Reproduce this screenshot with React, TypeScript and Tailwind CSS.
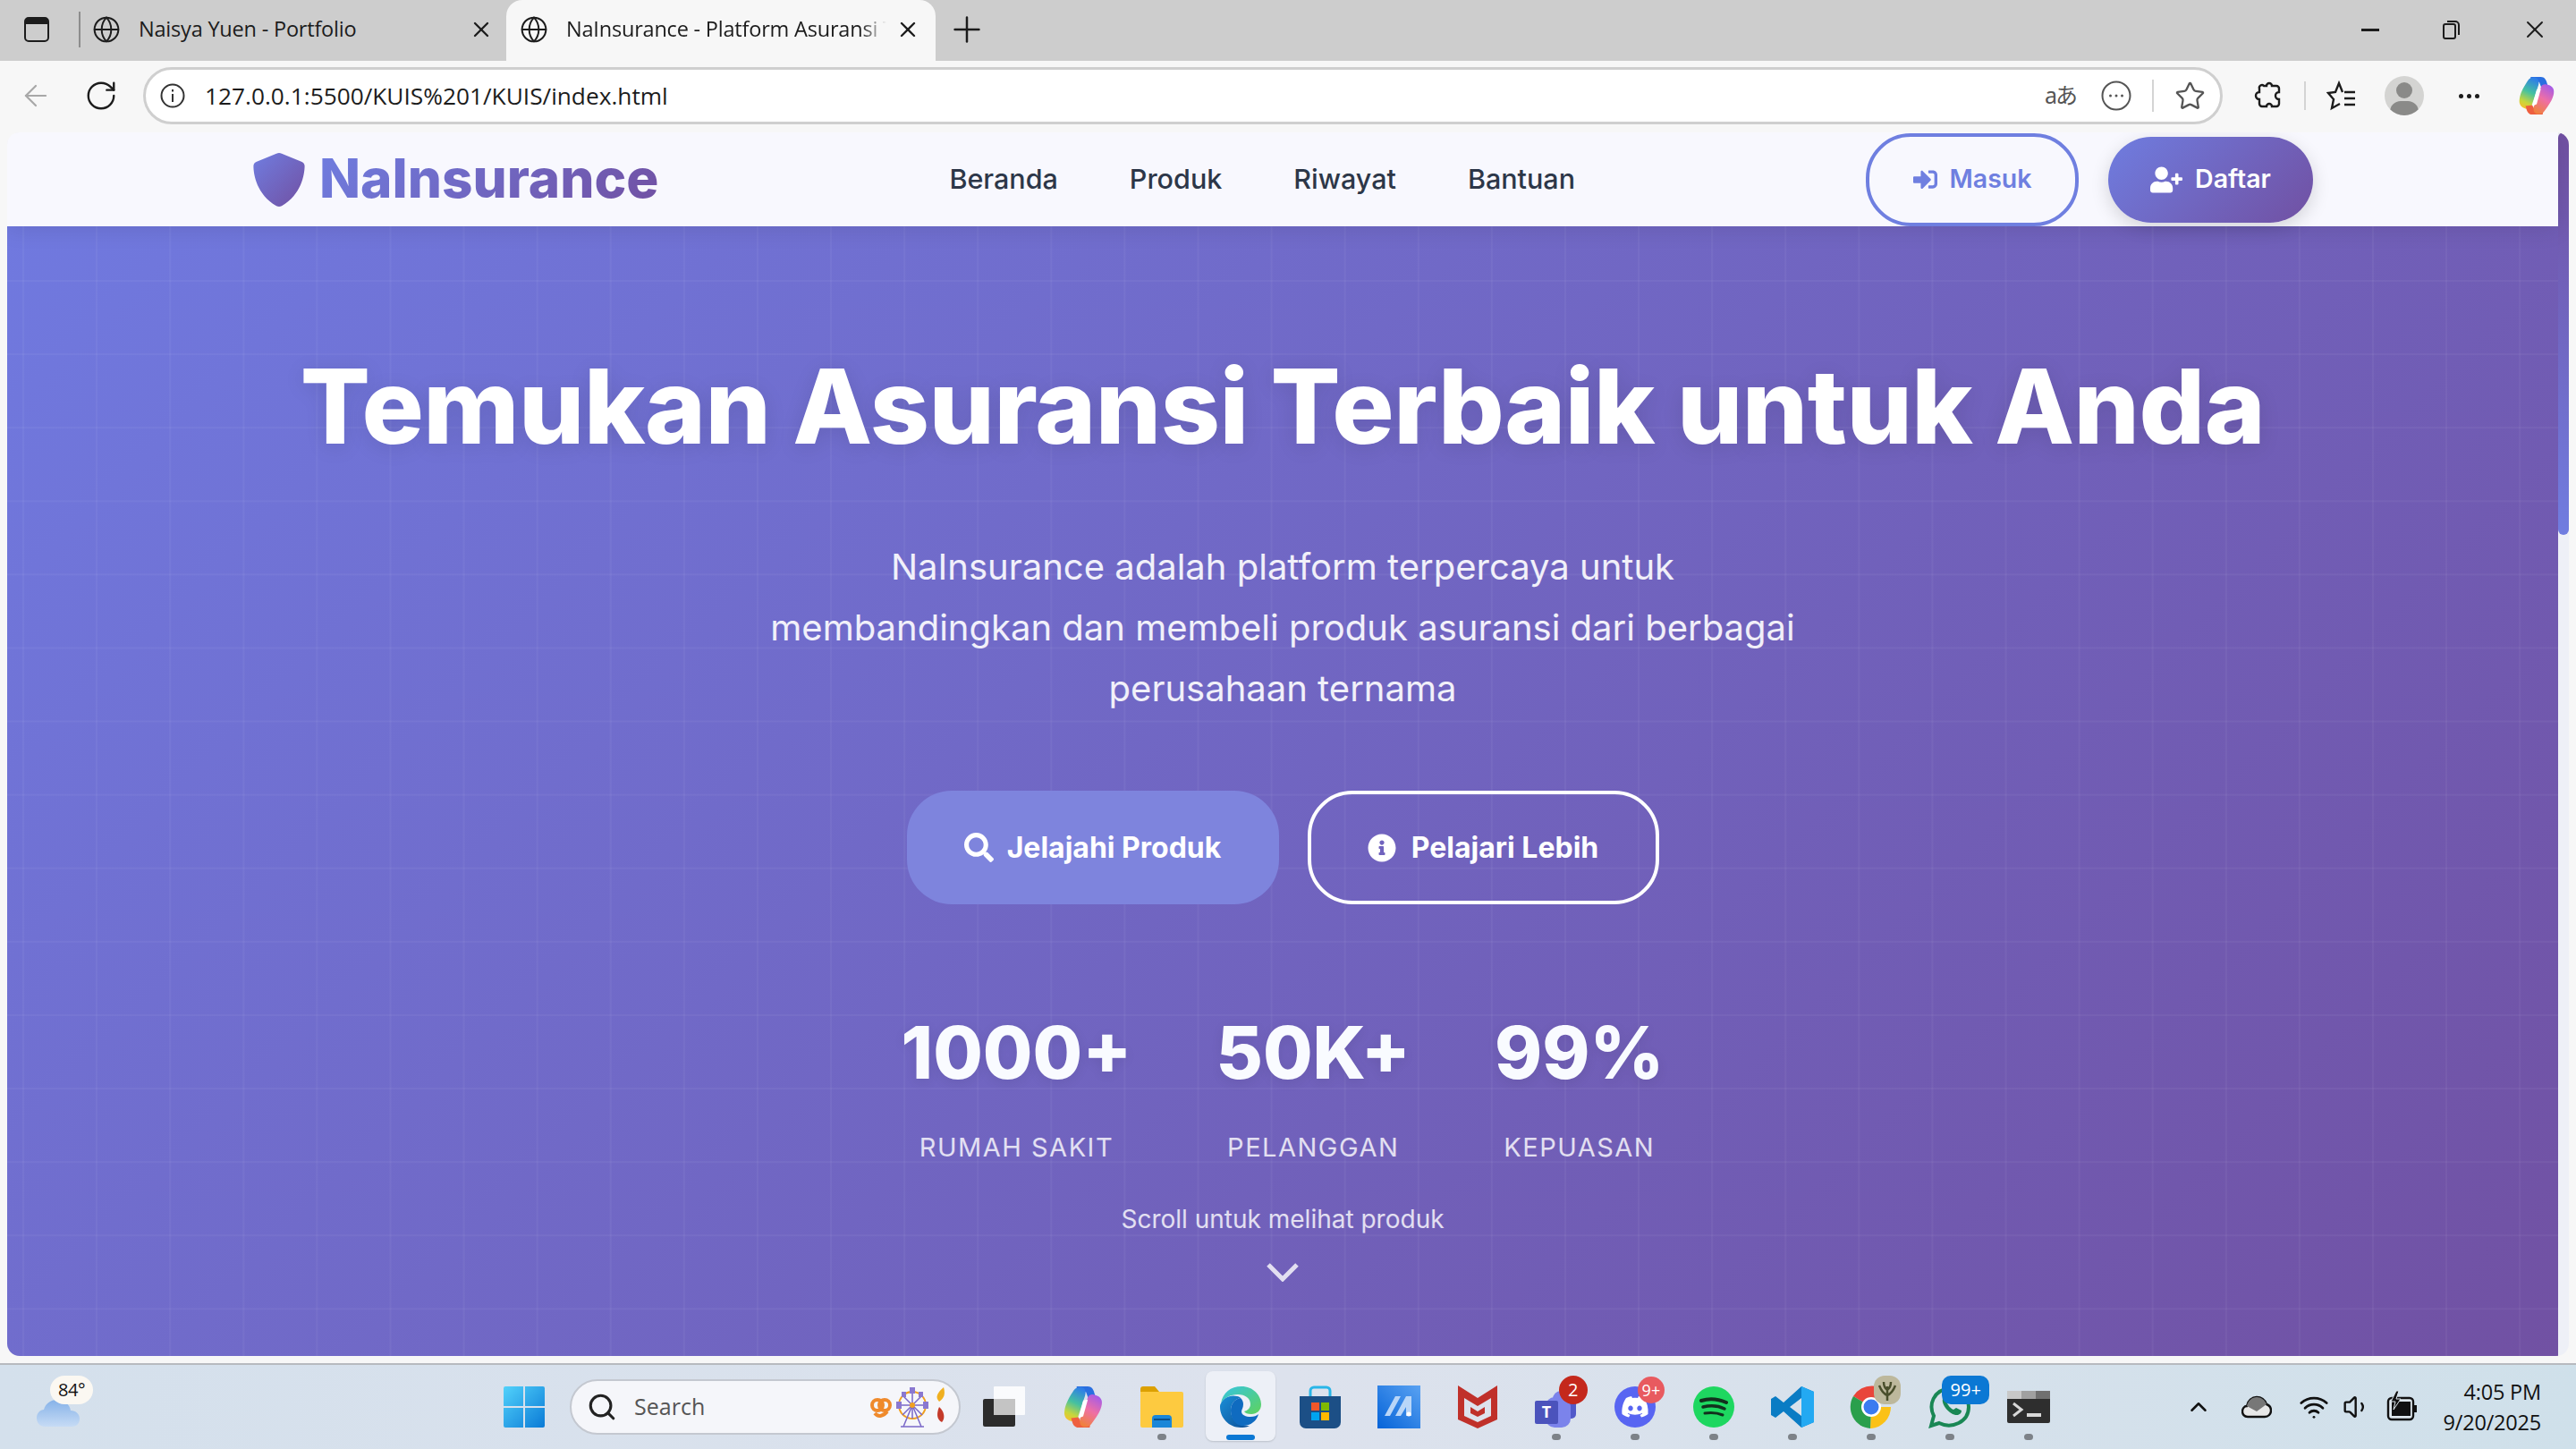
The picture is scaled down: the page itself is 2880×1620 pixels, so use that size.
import React from "react";
import { ArrowLeft, RotateCw, Globe, X, Plus, Star, Search, ChevronUp, Wifi, Volume1 } from "lucide-react";
import { FaSignInAlt, FaUserPlus, FaSearch, FaInfoCircle } from "react-icons/fa";

const UI = "font-['Open_Sans','Noto_Sans',sans-serif]";

function Copilot({ size, id }: { size: number; id: string }) {
  return (
    <svg width={size} height={size} viewBox="0 0 48 48">
      <defs>
        <linearGradient id={id + "a"} x1="0.6" y1="0" x2="0.3" y2="1">
          <stop offset="0" stopColor="#2f7fe6" />
          <stop offset="0.45" stopColor="#45c1a0" />
          <stop offset="0.8" stopColor="#c8d63c" />
          <stop offset="1" stopColor="#f2c22e" />
        </linearGradient>
        <linearGradient id={id + "b"} x1="0.7" y1="0" x2="0.3" y2="1">
          <stop offset="0" stopColor="#a45be8" />
          <stop offset="0.5" stopColor="#ee6fa6" />
          <stop offset="1" stopColor="#f0813f" />
        </linearGradient>
      </defs>
      <path d="M17 2h12c4 0 6 3 7 7l2 6-8 1-3-8-6 0c-3 0-4-2-4-6z" fill="#2a6fe0" />
      <path d="M14 6c2-3 6-4 9-3 4 1 4 6 3 9l-4 12-4 12c-1 3-4 4-7 3-5-1-8-5-7-11 1-8 6-16 10-22z" fill={`url(#${id}a)`} />
      <path d="M31 46H19c-4 0-6-3-7-7l-1-3 8-1 3 6 6 0c3 0 4 1 3 5z" fill="#ee5f3f" />
      <path d="M33 42c-2 3-6 4-9 3-4-1-4-6-3-9l4-12 4-10c1-3 4-4 7-3 5 1 9 4 8 10-1 8-7 15-11 21z" fill={`url(#${id}b)`} />
      <path d="M24 17l5-1-5 18-5 2z" fill="#fff" />
    </svg>
  );
}

function Shield() {
  return (
    <svg width="58" height="62" viewBox="0 0 58 62">
      <defs>
        <linearGradient id="sh" x1="0" y1="0" x2="1" y2="1">
          <stop offset="0" stopColor="#707de0" />
          <stop offset="1" stopColor="#7150a2" />
        </linearGradient>
      </defs>
      <path d="M29 1c1 0 2 .2 3 .7l22 9c2 .8 3.600 2.600 3.600 4.800-.1 9.500-3.500 32-25.600 44.700-2 1-4 1-6 0C4 47.500.4 25 .4 15.500c0-2.200 1.600-4 3.600-4.800l22-9c1-.5 2-.7 3-.7z" fill="url(#sh)" />
    </svg>
  );
}

function Slot({ children, dot, active }: { children: React.ReactNode; dot?: boolean; active?: boolean }) {
  return (
    <div className="relative flex h-full w-[88.1px] items-center justify-center">
      {active && <div className="absolute top-[7px] bottom-[9px] left-[5px] right-[5px] rounded-[8px] bg-[#edf0f7] shadow-[0_1px_2px_rgba(0,0,0,0.15)]" />}
      <div className="relative">{children}</div>
      {dot && <div className="absolute bottom-[10px] h-[7px] w-[10px] rounded-full bg-[#7d8288]" />}
      {active && <div className="absolute bottom-[10px] h-[6px] w-[32px] rounded-full bg-[#0b78d4]" />}
    </div>
  );
}

function Badge({ children, className }: { children: React.ReactNode; className: string }) {
  return <div className={`absolute flex items-center justify-center text-white ${UI} ${className}`}>{children}</div>;
}

function Stat({ value, label }: { value: string; label: string }) {
  return (
    <div className="flex flex-col items-center">
      <div className="text-[80.500px] leading-[96px] font-extrabold text-[#f9fbff] [text-shadow:0_3px_14px_rgba(0,0,0,0.08)]">{value}</div>
      <div className="mt-[38px] text-[29px] leading-[40px] font-normal tracking-[1.5px] text-white/80">{label}</div>
    </div>
  );
}

export default function App() {
  return (
    <div className="flex h-[1620px] w-[2880px] flex-col overflow-hidden bg-[#f7f7f7] font-['Inter',sans-serif]">
      {/* tab strip */}
      <div className={`flex h-[68px] shrink-0 items-center bg-[#cdcdcd] pb-[2px] text-[#1c1c1c] ${UI}`}>
        <div className="ml-[27px] h-[28px] w-[28px] rounded-[5px] border-[2.500px] border-[#1c1c1c] border-t-[8px]" />
        <div className="ml-[33px] h-[40px] w-[2px] bg-[#8d8d8d]" />
        <div className="flex h-full w-[476px] items-center pl-[13px]">
          <Globe size={32} strokeWidth={1.5} />
          <span className="ml-[20px] text-[23.500px] tracking-[-0.2px] whitespace-nowrap">Naisya Yuen - Portfolio</span>
          <X size={28} strokeWidth={2} className="ml-auto mr-[14px]" />
        </div>
        <div className="-mb-[2px] flex h-[68px] w-[480px] items-center rounded-t-[18px] bg-[#f7f7f7] pb-[2px] pl-[15px]">
          <Globe size={32} strokeWidth={1.5} />
          <span className="ml-[20px] w-[358px] overflow-hidden text-[23.500px] tracking-[-0.2px] whitespace-nowrap [mask-image:linear-gradient(90deg,black_92%,transparent)]">NaInsurance - Platform Asuransi T</span>
          <X size={28} strokeWidth={2} className="ml-auto mr-[17px]" />
        </div>
        <Plus size={46} strokeWidth={1.3} className="ml-[12px]" />
        <div className="ml-auto flex items-center">
          <div className="h-[3px] w-[20px] bg-[#1c1c1c]" />
          <svg className="ml-[71px]" width="20" height="22" viewBox="0 0 20 22" fill="none" stroke="#1c1c1c" strokeWidth="2">
            <rect x="1" y="5" width="13" height="16" rx="2" />
            <path d="M5 2h9a4 4 0 0 1 4 4v11" />
          </svg>
          <X size={32} strokeWidth={1.4} className="ml-[67px] mr-[30px]" />
        </div>
      </div>

      {/* toolbar */}
      <div className={`flex h-[78px] shrink-0 items-center bg-[#f7f7f7] text-[#1c1c1c] ${UI}`}>
        <ArrowLeft size={38} strokeWidth={1.4} color="#a8a8a8" className="ml-[21px]" />
        <RotateCw size={38} strokeWidth={1.5} className="ml-[35px]" />
        <div className="ml-[28px] flex h-[64px] w-[2325px] items-center rounded-full border-[3px] border-[#cfcfcf] bg-white">
          <svg className="ml-[16px]" width="28" height="28" viewBox="0 0 28 28" fill="none" stroke="#333" strokeWidth="2">
            <circle cx="14" cy="14" r="12.500" />
            <path d="M14 12v9M14 7v2.500" />
          </svg>
          <span className="ml-[22px] pt-[2px] text-[26.250px] whitespace-nowrap">127.0.0.1:5500/KUIS%201/KUIS/index.html</span>
          <span className="ml-auto font-['Noto_Sans','Noto_Sans_CJK_JP',sans-serif] text-[25px] tracking-[-2px] text-[#555]">aあ</span>
          <svg className="ml-[28px]" width="34" height="34" viewBox="0 0 34 34" fill="none" stroke="#555" strokeWidth="2">
            <circle cx="17" cy="17" r="15.500" />
            <circle cx="10.500" cy="17" r="1.500" fill="#555" stroke="none" />
            <circle cx="17" cy="17" r="1.500" fill="#555" stroke="none" />
            <circle cx="23.500" cy="17" r="1.500" fill="#555" stroke="none" />
          </svg>
          <div className="ml-[23px] h-[36px] w-[2px] bg-[#d4d4d4]" />
          <Star size={35} strokeWidth={1.6} color="#555" className="ml-[23px] mr-[16px]" />
        </div>
        <svg className="ml-[35px]" width="32" height="34" viewBox="0 0 32 34" fill="none" stroke="#1c1c1c" strokeWidth="2.400">
          <path d="M11 6h3a3 3 0 1 1 6 0h5a3 3 0 0 1 3 3v4a3.500 3.500 0 1 0 0 8v5a3 3 0 0 1-3 3h-5a3 3 0 1 0-6 0H9a3 3 0 0 1-3-3v-5a3.500 3.500 0 1 1 0-8V9a3 3 0 0 1 5-3z" />
        </svg>
        <div className="ml-[24px] h-[32px] w-[2px] bg-[#d4d4d4]" />
        <svg className="ml-[23px]" width="34" height="34" viewBox="0 0 34 34" fill="none" stroke="#1c1c1c" strokeWidth="2.400">
          <path d="M18 13L14 3l-4 10-8 1 6 7-2 10 9-5" />
          <path d="M20 13h12M20 20h12M20 27h12" />
        </svg>
        <div className="relative ml-[31px] h-[44px] w-[44px] overflow-hidden rounded-full bg-[#d4d4d2]">
          <div className="absolute top-[7px] left-[13px] h-[18px] w-[18px] rounded-full bg-[#8a8a88]" />
          <div className="absolute top-[28px] left-[6px] h-[24px] w-[32px] rounded-full bg-[#8a8a88]" />
        </div>
        <div className="ml-[39px] flex gap-[4px]">
          <div className="h-[5px] w-[5px] rounded-full bg-[#1c1c1c]" />
          <div className="h-[5px] w-[5px] rounded-full bg-[#1c1c1c]" />
          <div className="h-[5px] w-[5px] rounded-full bg-[#1c1c1c]" />
        </div>
        <div className="ml-[41px]"><Copilot size={46} id="c1" /></div>
      </div>

      {/* page viewport */}
      <div className="flex min-h-0 flex-1 bg-[#f7f7f7] pt-[2px] pr-[8px] pb-[8px] pl-[8px]">
        <div className="flex flex-1 overflow-hidden rounded-[14px]">
          <div className="flex min-w-0 flex-1 flex-col">
            <nav className="relative z-10 flex h-[105px] shrink-0 items-center justify-between bg-[#f8f8fe] pr-[274px] pl-[275px] shadow-[0_3px_24px_rgba(0,0,0,0.1)]">
              <div className="flex items-center gap-[16px]">
                <Shield />
                <span className="bg-[linear-gradient(135deg,#6f7de0,#7150a2)] bg-clip-text pb-[1px] text-[60.200px] leading-[72px] font-extrabold text-transparent">NaInsurance</span>
              </div>
              <div className="flex items-center gap-[80px] pb-[2px] text-[30.500px] font-medium text-[#2d3748]">
                <span>Beranda</span>
                <span>Produk</span>
                <span>Riwayat</span>
                <span>Bantuan</span>
              </div>
              <div className="flex items-center gap-[33px]">
                <div className="flex h-[104px] w-[238px] items-center justify-center gap-[14px] rounded-[50px] border-[4px] border-[#6f7fe0] text-[28.500px] font-semibold text-[#6f7fe0]">
                  <FaSignInAlt size={27} />
                  <span>Masuk</span>
                </div>
                <div className="flex h-[96px] w-[229px] items-center justify-center gap-[14px] rounded-[48px] bg-[linear-gradient(135deg,#6f7de0,#7150a2)] text-[28.500px] font-semibold text-white shadow-[0_6px_20px_rgba(0,0,0,0.15)]">
                  <FaUserPlus size={36} />
                  <span>Daftar</span>
                </div>
              </div>
            </nav>

            <main className="relative flex min-h-0 flex-1 flex-col items-center bg-[linear-gradient(135deg,#7079df_0%,#7151a3_100%)] text-white">
              <div className="pointer-events-none absolute inset-0 bg-[linear-gradient(rgba(255,255,255,0.045)_2px,transparent_2px),linear-gradient(90deg,rgba(255,255,255,0.045)_2px,transparent_2px)] bg-[size:82.100px_82.100px] bg-[position:17px_60px]" />
              <h1 className="relative mt-[133px] text-[115.600px] leading-[136px] font-extrabold tracking-[-0.5px] whitespace-nowrap [text-shadow:0_4px_24px_rgba(0,0,0,0.1)]">Temukan Asuransi Terbaik untuk Anda</h1>
              <p className="relative mt-[78px] w-[1300px] text-center text-[40px] leading-[68px] font-normal text-white/90">
                NaInsurance adalah platform terpercaya untuk
                <br />
                membandingkan dan membeli produk asuransi dari berbagai
                <br />
                perusahaan ternama
              </p>
              <div className="relative mt-[80px] flex gap-[32px] text-[32px] font-bold">
                <div className="flex h-[127px] w-[416px] items-center justify-center gap-[15px] rounded-[50px] bg-[#7e84dd]">
                  <FaSearch size={33} />
                  <span>Jelajahi Produk</span>
                </div>
                <div className="flex h-[127px] w-[393px] items-center justify-center gap-[17px] rounded-[50px] border-[4px] border-white">
                  <FaInfoCircle size={32} />
                  <span>Pelajari Lebih</span>
                </div>
              </div>
              <div className="relative mt-[118px] flex gap-[94px]">
                <Stat value="1000+" label="RUMAH SAKIT" />
                <Stat value="50K+" label="PELANGGAN" />
                <Stat value="99%" label="KEPUASAN" />
              </div>
              <div className="relative mt-[40px] text-[28px] leading-[40px] text-white/80">Scroll untuk melihat produk</div>
              <svg className="relative mt-[28px]" width="36" height="22" viewBox="0 0 36 22" fill="none" stroke="#fff" strokeOpacity="0.8" strokeWidth="5">
                <path d="M2 3l16 16L34 3" />
              </svg>
            </main>
          </div>
          <div className="w-[12px] shrink-0 bg-[#eef0f7]">
            <div className="h-[450px] w-full rounded-full bg-[linear-gradient(180deg,#7150a2,#707de0)]" />
          </div>
        </div>
      </div>

      {/* taskbar */}
      <div className={`flex h-[96px] shrink-0 items-center border-t-[2px] border-[#b7babf] bg-[linear-gradient(90deg,#d4e0ec,#dde2ed_50%,#cfe0ea)] ${UI}`}>
        {/* weather */}
        <div className="relative ml-[41px] h-full w-[501px]">
          <svg className="absolute top-[38px] left-0" width="48" height="32" viewBox="0 0 48 32">
            <defs>
              <linearGradient id="cl" x1="0" y1="0" x2="0" y2="1">
                <stop offset="0" stopColor="#86b2e8" />
                <stop offset="1" stopColor="#c6dbf5" />
              </linearGradient>
            </defs>
            <path d="M10 31C2 31 0 25 0 21c0-5 4-9 8-9 2-7 8-11 14-11 9 0 15 5 16 12 6 0 10 4 10 9 0 5-3 9-9 9z" fill="url(#cl)" />
          </svg>
          <div className="absolute top-[36px] left-[33px] h-[8px] w-[10px] bg-[#f2701c]" />
          <div className="absolute top-[12px] left-[15px] flex h-[32px] w-[48px] items-center justify-center rounded-full bg-[#fbf8f2] text-[20px] tracking-[-0.5px] text-[#111]">84°</div>
        </div>
        {/* start */}
        <Slot>
          <svg width="46" height="46" viewBox="0 0 46 46">
            <defs>
              <linearGradient id="w1" x1="0" y1="0" x2="1" y2="1">
                <stop offset="0" stopColor="#52d2fb" />
                <stop offset="1" stopColor="#0a7ad6" />
              </linearGradient>
            </defs>
            <path d="M0 2a2 2 0 0 1 2-2h20v22H0zM24 0h20a2 2 0 0 1 2 2v20H24zM0 24h22v22H2a2 2 0 0 1-2-2zM24 24h22v20a2 2 0 0 1-2 2H24z" fill="url(#w1)" />
          </svg>
        </Slot>
        {/* search */}
        <div className="ml-[7px] flex h-[62px] w-[437px] items-center rounded-full border-[2px] border-[#c4c8d0] bg-[#f5f6fa]">
          <Search size={34} strokeWidth={2.2} color="#222" className="ml-[17px]" />
          <span className="ml-[19px] text-[25px] text-[#555]">Search</span>
          <svg className="ml-auto mr-[12px]" width="88" height="46" viewBox="0 0 88 46" fill="none">
            <g stroke="#ef8a2c" strokeWidth="4">
              <circle cx="9" cy="21" r="6" />
              <circle cx="17" cy="21" r="6" />
              <path d="M6 30c4 5 10 3 14-2" />
            </g>
            <g stroke="#7a68c8" strokeWidth="1.500">
              <circle cx="48" cy="21" r="15" stroke="#f0a020" strokeWidth="2" />
              <path d="M48 21L38 45M48 21L58 45M35 45H61M33 21H63M48 6V36M37 10L59 32M59 10L37 32" />
            </g>
            <circle cx="48" cy="21" r="3" fill="#f0a020" />
            <rect x="30" y="17" width="6" height="8" fill="#8a78d0" />
            <rect x="60" y="17" width="6" height="8" fill="#8a78d0" />
            <rect x="45" y="1" width="6" height="7" fill="#8a78d0" />
            <rect x="36" y="6" width="5" height="6" fill="#8a78d0" />
            <rect x="55" y="6" width="5" height="6" fill="#8a78d0" />
            <path d="M78 17c-5-5-2-10 5-16 2 7 1 12-5 16z" fill="#f0b020" />
            <path d="M78 23c6 5 7 13 3 17-6-3-6-10-3-17z" fill="#c43a2a" />
          </svg>
        </div>
        {/* pinned */}
        <div className="ml-[5px] flex h-full">
          <Slot>
            <svg width="48" height="46" viewBox="0 0 48 46">
              <rect x="0" y="14" width="36" height="31" rx="2" fill="#2c2c2c" />
              <rect x="12" y="0" width="35" height="32" rx="1" fill="#ffffff" fillOpacity="0.85" />
              <rect x="12" y="14" width="24" height="18" fill="#c4c4c4" />
            </svg>
          </Slot>
          <Slot><Copilot size={50} id="c2" /></Slot>
          <Slot dot>
            <svg width="48" height="46" viewBox="0 0 48 46">
              <path d="M0 3a3 3 0 0 1 3-3h13l5 6H0z" fill="#dca000" />
              <path d="M0 6h46a2 2 0 0 1 2 2v36a2 2 0 0 1-2 2H2a2 2 0 0 1-2-2z" fill="#fdca40" />
              <path d="M13 46V36a4 4 0 0 1 4-4h14a4 4 0 0 1 4 4v10z" fill="#1a86d8" />
              <rect x="15" y="36" width="18" height="2" fill="#0b4f8a" />
            </svg>
          </Slot>
          <Slot active>
            <svg width="48" height="48" viewBox="0 0 48 48">
              <defs>
                <linearGradient id="e1" x1="0" y1="0" x2="1" y2="1">
                  <stop offset="0" stopColor="#35c4e2" />
                  <stop offset="1" stopColor="#5fd35c" />
                </linearGradient>
                <linearGradient id="e2" x1="0" y1="0" x2="1" y2="1">
                  <stop offset="0" stopColor="#1a8fd8" />
                  <stop offset="1" stopColor="#0d4f97" />
                </linearGradient>
              </defs>
              <path d="M2 20C4 8 13 1 25 1c13 0 22 10 22 20 0 7-5 11-11 11-4 0-7-1-8-3 4-1 7-4 7-8 0-7-6-11-14-11C13 10 5 14 2 20z" fill="url(#e1)" />
              <path d="M2 20c3-6 10-10 18-8 2 0 3 1 4 2-7 1-11 7-11 14 0 9 7 16 16 17 2 0 4 0 5 0-4 2-7 2-10 2C11 47 1 36 1 24c0-1 0-3 1-4z" fill="url(#e2)" />
              <path d="M13 28c0-7 4-13 11-14 2 2 3 4 3 7 0 4-2 6-2 8 0 4 5 6 10 6 4 0 7-1 9-3-2 8-10 14-19 13C18 44 13 37 13 28z" fill="#0f6bc0" />
            </svg>
          </Slot>
          <Slot>
            <svg width="46" height="48" viewBox="0 0 46 48">
              <path d="M12 12V6a4 4 0 0 1 4-4h14a4 4 0 0 1 4 4v6" fill="none" stroke="#29b6e8" strokeWidth="3" />
              <path d="M0 12h46v29a7 7 0 0 1-7 7H7a7 7 0 0 1-7-7z" fill="#1c4f86" />
              <rect x="13" y="19" width="9" height="9" fill="#f0572a" />
              <rect x="24" y="19" width="9" height="9" fill="#7fba00" />
              <rect x="13" y="30" width="9" height="9" fill="#00a4ef" />
              <rect x="24" y="30" width="9" height="9" fill="#ffb900" />
            </svg>
          </Slot>
          <Slot>
            <svg width="48" height="48" viewBox="0 0 48 48">
              <defs>
                <linearGradient id="m1" x1="0" y1="1" x2="1" y2="0">
                  <stop offset="0" stopColor="#0563d8" />
                  <stop offset="1" stopColor="#5aa2f2" />
                </linearGradient>
              </defs>
              <rect width="48" height="48" fill="url(#m1)" />
              <path d="M8 34L20 12h6L14 34zM20 34L32 12h6v22h-6V24l-6 10z" fill="#b9d6f8" />
              <circle cx="35" cy="32" r="2.500" fill="#fff" />
            </svg>
          </Slot>
          <Slot>
            <svg width="44" height="48" viewBox="0 0 44 48">
              <path d="M0 0l22 14L44 0v38L22 48 0 38z" fill="#c0302a" />
              <path d="M7 14l15 9 15-9v20l-15 7-15-7z" fill="#dde2ed" />
              <path d="M14 24l8 5 8-5v7l-8 4-8-4z" fill="#c0302a" />
            </svg>
          </Slot>
          <Slot dot>
            <div className="relative">
              <svg width="48" height="46" viewBox="0 0 48 46">
                <circle cx="29" cy="14" r="9" fill="#7b83eb" />
                <rect x="30" y="10" width="16" height="26" rx="5" fill="#5059c9" />
                <rect x="12" y="12" width="28" height="34" rx="10" fill="#7b83eb" />
                <rect x="0" y="16" width="26" height="26" rx="2" fill="#4b53bc" />
                <text x="13" y="35" textAnchor="middle" fontSize="18" fontWeight="700" fill="#fff">T</text>
              </svg>
              <Badge className="-top-[12px] -right-[11px] h-[32px] w-[32px] rounded-full bg-[#c4281c] text-[20px]">2</Badge>
            </div>
          </Slot>
          <Slot dot>
            <div className="relative">
              <div className="flex h-[46px] w-[46px] items-center justify-center rounded-full bg-[#5865f2]">
                <svg width="30" height="24" viewBox="0 0 30 24">
                  <path d="M25 2c-2-1-4-1.500-6-2l-1 2c-2-.3-4-.3-6 0L11 0C9 .5 7 1 5 2 1 8 0 14 .5 20c2.500 1.800 5 3 7.500 3.500L9.500 21c-1-.4-2-.8-2.800-1.400l.7-.5c4.800 2.200 10.400 2.200 15.200 0l.7.5c-.9.600-1.800 1-2.800 1.400l1.500 2.500c2.500-.5 5-1.700 7.500-3.500C30 13 28.500 7 25 2zM10 16.500c-1.500 0-2.700-1.400-2.700-3s1.200-3 2.700-3 2.800 1.400 2.700 3c0 1.600-1.200 3-2.700 3zm10 0c-1.500 0-2.700-1.400-2.700-3s1.200-3 2.700-3 2.800 1.400 2.700 3c0 1.600-1.200 3-2.700 3z" fill="#fff" />
                </svg>
              </div>
              <Badge className="-top-[11px] -right-[10px] h-[30px] w-[30px] rounded-full bg-[#e85a5f] text-[18px]">9+</Badge>
            </div>
          </Slot>
          <Slot dot>
            <div className="flex h-[46px] w-[46px] items-center justify-center rounded-full bg-[#1ed760]">
              <svg width="32" height="26" viewBox="0 0 32 26" fill="none" stroke="#12301d" strokeLinecap="round">
                <path d="M2 6c9-3 19-2 28 2" strokeWidth="4" />
                <path d="M4 13c8-2 16-2 24 2" strokeWidth="3.500" />
                <path d="M6 20c7-1 13-1 20 2" strokeWidth="3" />
              </svg>
            </div>
          </Slot>
          <Slot dot>
            <svg width="48" height="48" viewBox="0 0 48 48">
              <path d="M34 1l14 6v34l-14 6-20-18-9 7-5-3V15l5-3 9 7zM34 14L21 24l13 10z" fill="#0a7cc4" />
              <path d="M34 1l14 6v34l-14 6z" fill="#23a9f2" />
            </svg>
          </Slot>
          <Slot dot>
            <div className="relative">
              <svg width="48" height="48" viewBox="0 0 48 48">
                <path d="M24 24L4 12A24 24 0 0 1 46 14H24z" fill="#e9453a" />
                <path d="M24 24h22A24 24 0 0 1 24 48l-1 0z" fill="#fbc116" />
                <path d="M24 24L23 48A24 24 0 0 1 4 12z" fill="#2a9f4c" />
                <circle cx="24" cy="24" r="11" fill="#fff" />
                <circle cx="24" cy="24" r="8.500" fill="#3b7bf0" />
              </svg>
              <div className="absolute -top-[11px] -right-[9px] h-[32px] w-[30px] rounded-[12px] bg-[#bdb89c]">
                <svg width="30" height="32" viewBox="0 0 30 32" fill="none" stroke="#4a4f2c" strokeWidth="2.500">
                  <path d="M15 28V12M15 22C10 20 8 16 6 11M15 22c5-2 7-6 9-11M15 16c-3-2-4-5-4-9M15 16c3-2 4-5 4-9" />
                </svg>
              </div>
            </div>
          </Slot>
          <Slot dot>
            <div className="relative">
              <svg width="48" height="48" viewBox="0 0 48 48" fill="none">
                <path d="M3 45l3-11C0 22 5 5 24 3c12 0 21 9 21 21 0 17-19 25-33 18z" stroke="#198754" strokeWidth="4" />
                <path d="M16 15c-2 6 8 19 17 18 3-1 4-3 4-5l-6-3-3 2c-3-1-6-5-7-7l2-3-2-5c-2 0-4 1-5 3z" fill="#198754" />
              </svg>
              <Badge className="-top-[11px] left-[15px] h-[32px] w-[53px] rounded-[10px] bg-[#0b78d4] text-[20px]">99+</Badge>
            </div>
          </Slot>
          <Slot dot>
            <svg width="48" height="36" viewBox="0 0 48 36">
              <rect width="48" height="36" rx="2" fill="#2e2e2e" />
              <rect width="16" height="9" fill="#c8c8c8" />
              <rect x="16" width="16" height="9" fill="#a0a0a0" />
              <rect x="32" width="16" height="9" fill="#707070" />
              <path d="M7 14l9 7-9 7" fill="none" stroke="#d8d8d8" strokeWidth="3" />
              <rect x="22" y="25" width="16" height="4" fill="#d8d8d8" />
            </svg>
          </Slot>
        </div>
        {/* tray */}
        <div className="flex h-full flex-1 items-center text-[#111]">
          <ChevronUp size={30} strokeWidth={2} className="ml-[131px]" />
          <svg className="ml-[33px]" width="34" height="26" viewBox="0 0 34 26">
            <path d="M7 24C3 24 1 21 1 18c0-3 2-6 5-6 1-6 6-10 11-10 5 0 9 3 11 8 3 1 5 4 5 7 0 4-3 7-7 7z" fill="#e8e8e8" stroke="#111" strokeWidth="2.400" />
            <path d="M6 12c1-6 6-10 11-10 5 0 9 3 11 8L17 18z" fill="#777" />
          </svg>
          <Wifi size={34} strokeWidth={2} className="ml-[30px]" />
          <Volume1 size={32} strokeWidth={1.8} className="ml-[15px]" />
          <svg className="ml-[17px]" width="34" height="36" viewBox="0 0 34 36">
            <rect x="2" y="8" width="28" height="24" rx="4" fill="#dfe8ee" stroke="#111" strokeWidth="2.400" />
            <rect x="6" y="12" width="21" height="16" fill="#111" />
            <rect x="31" y="16" width="3" height="8" fill="#111" />
            <path d="M11 0L5 12h5l-2 9 8-12h-5l3-9z" fill="#111" stroke="#dfe8ee" strokeWidth="1" />
          </svg>
          <div className="mr-[39px] ml-auto flex flex-col items-end text-[23.500px] leading-[34px] tracking-[-0.2px] text-[#111]">
            <span>4:05 PM</span>
            <span>9/20/2025</span>
          </div>
        </div>
      </div>
    </div>
  );
}
